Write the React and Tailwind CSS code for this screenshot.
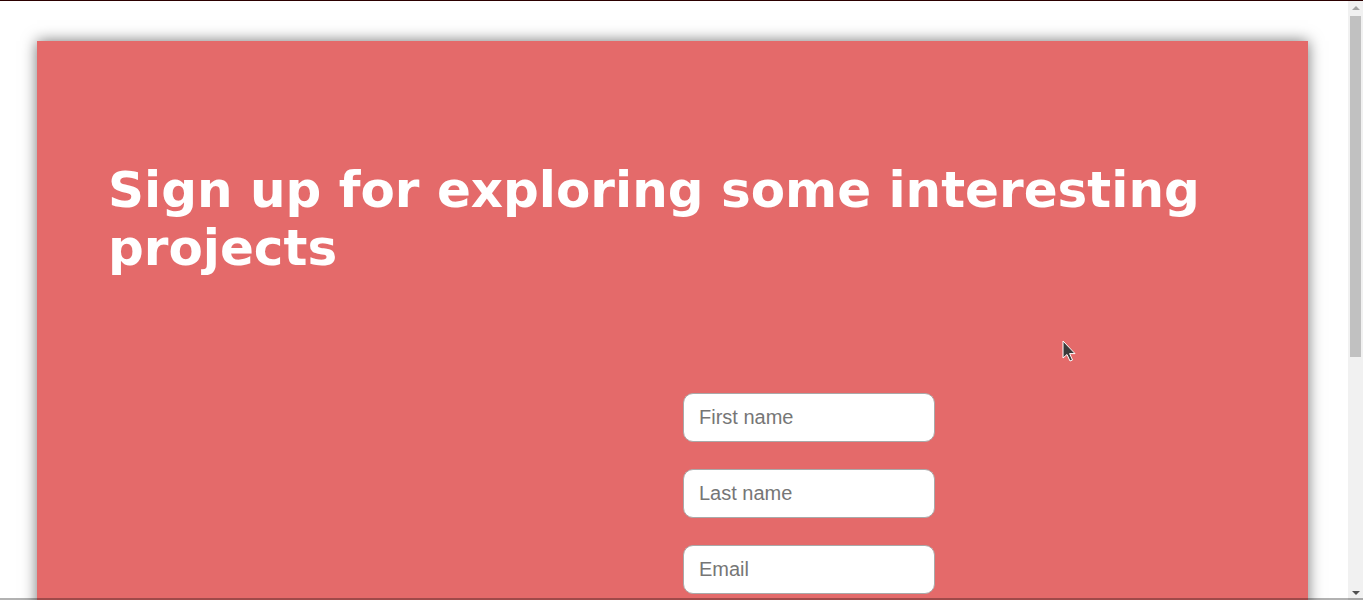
export default function App() {
  const inputCls =
    "block w-[252px] h-[49px] box-border rounded-[10px] border border-[#a9a9a9] bg-white pl-[15px] pr-3 text-[20px] text-[#333] placeholder:text-[#767676] outline-none";
  return (
    <div className="min-h-[1003px] bg-white pt-[1px] pb-10 pr-[15px]" style={{ fontFamily: '"DejaVu Sans", sans-serif' }}>
      <div className="fixed top-0 left-0 right-0 h-[1px] bg-[#2b0000] z-50" />
      <div className="fixed top-0 right-0 bottom-0 w-[15px] bg-[#f1f1f1] z-40 flex flex-col items-center">
        <div className="h-[15px] w-full flex items-center justify-center">
          <div className="w-0 h-0 border-l-[4px] border-r-[4px] border-b-[4px] border-l-transparent border-r-transparent border-b-[#a3a3a3]" />
        </div>
        <div className="w-[11px] h-[341px] bg-[#c1c1c1] mt-[1px]" />
        <div className="flex-1" />
        <div className="h-[15px] w-full flex items-center justify-center">
          <div className="w-0 h-0 border-l-[4px] border-r-[4px] border-t-[4px] border-l-transparent border-r-transparent border-t-[#505050]" />
        </div>
      </div>
      <div className="fixed bottom-0 left-0 right-0 h-[2px] bg-black/30 z-50" />
      <div className="relative mt-10 ml-[37px] mr-10 h-[922px] bg-[#e46a6a] shadow-[0_0_14px_rgba(0,0,0,0.55)] px-[71px] pt-[120px]">
        <h1 className="text-[50px] font-bold leading-[58px] text-white tracking-normal">
          Sign up for exploring some interesting projects
        </h1>
        <div className="flex mt-[116px]">
          <div className="w-[575px] shrink-0" />
          <form className="flex flex-col gap-[27px]" style={{ fontFamily: '"Liberation Sans", Arial, sans-serif' }}>
            <input className={inputCls} placeholder="First name" />
            <input className={inputCls} placeholder="Last name" />
            <input className={inputCls} placeholder="Email" />
          </form>
        </div>
        <svg className="absolute left-[1025px] top-[299px]" width="16" height="24" viewBox="0 0 16 24">
          <path d="M1 1 L1 18 L5 14.5 L8 21 L10.5 20 L7.6 13.6 L13 13.6 Z" fill="#3a3a3a" stroke="#ffffff" strokeWidth="1" strokeLinejoin="round" />
        </svg>
      </div>
    </div>
  );
}
